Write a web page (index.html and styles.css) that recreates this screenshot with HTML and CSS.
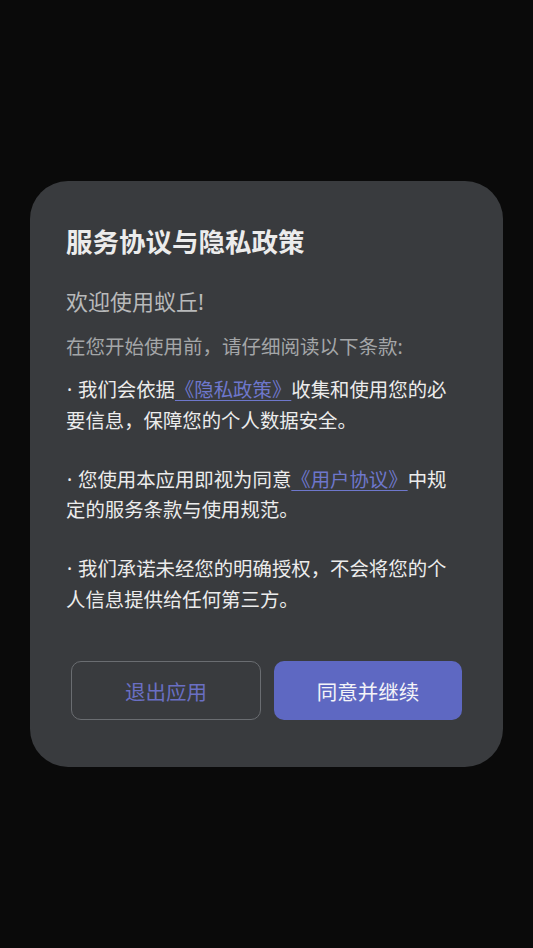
FILE: index.html
```html
<!DOCTYPE html>
<html lang="zh-CN">
<head>
<meta charset="utf-8">
<title>服务协议与隐私政策</title>
<link rel="stylesheet" href="styles.css">
</head>
<body>
<div class="screen">
  <div class="dialog">
    <h1 class="title">服务协议与隐私政策</h1>
    <p class="welcome">欢迎使用蚁丘<span class="latin">!</span></p>
    <p class="intro">在您开始使用前，请仔细阅读以下条款<span class="latin">:</span></p>
    <p class="item">我们会依据<a class="link" href="#">《隐私政策》</a>收集和使用您的必要信息，保障您的个人数据安全。</p>
    <p class="item">您使用本应用即视为同意<a class="link" href="#">《用户协议》</a>中规定的服务条款与使用规范。</p>
    <p class="item">我们承诺未经您的明确授权，不会将您的个人信息提供给任何第三方。</p>
    <div class="actions">
      <button class="btn btn-outline">退出应用</button>
      <button class="btn btn-primary">同意并继续</button>
    </div>
  </div>
</div>
</body>
</html>
```

FILE: styles.css
```css
html, body {
  margin: 0;
  padding: 0;
  background: #0a0a0a;
}
body {
  font-family: "Noto Sans CJK SC", "Noto Sans", sans-serif;
}
.screen {
  width: 533px;
  height: 948px;
  display: flex;
  align-items: center;
  justify-content: center;
}
.dialog {
  box-sizing: border-box;
  width: 473px;
  height: 586px;
  background: #393b3e;
  border-radius: 38px;
  padding: 42px 44px 0 36px;
}
.title {
  margin: 0;
  font-size: 26.5px;
  line-height: 36px;
  font-weight: 700;
  color: #ececec;
}
.welcome {
  margin: 26px 0 0 0;
  font-size: 22px;
  line-height: 30px;
  color: #b8b9ba;
}
.latin {
  font-family: "Noto Sans", sans-serif;
}
.intro {
  margin: 15px 0 0 0;
  font-size: 19.5px;
  line-height: 30px;
  color: #a4a6a8;
}
.item {
  margin: 12px 0 0 0;
  font-size: 19.4px;
  line-height: 29.5px;
  color: #ececec;
}
.item::before {
  content: "·";
  display: inline-block;
  width: 12px;
  font-family: "Noto Sans", sans-serif;
  text-indent: 1px;
}
.item + .item {
  margin-top: 29.5px;
}
.link {
  color: #6e77cc;
  text-decoration: underline;
  text-decoration-thickness: 1px;
  text-underline-offset: 3px;
}
.actions {
  display: flex;
  gap: 13px;
  margin: 48px -3px 0 5px;
}
.btn {
  flex: 1;
  height: 59px;
  border-radius: 10px;
  font-family: inherit;
  font-size: 20.5px;
  box-sizing: border-box;
}
.btn-outline {
  background: transparent;
  border: 1.5px solid #6a6d71;
  color: #6a6fc3;
}
.btn-primary {
  background: #5e68c2;
  border: none;
  color: #f4f4f8;
}
```
